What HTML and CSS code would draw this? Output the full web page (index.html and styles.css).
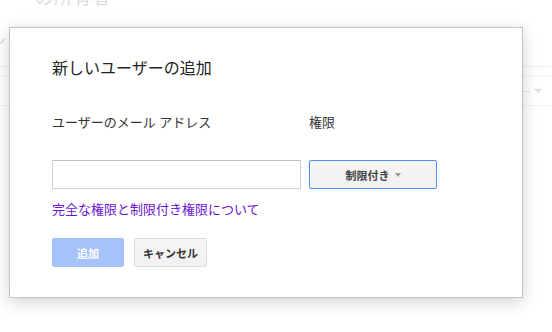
FILE: index.html
```html
<!DOCTYPE html>
<html lang="ja">
<head>
<meta charset="utf-8">
<link rel="stylesheet" href="styles.css">
</head>
<body>
<div class="page">
  <div class="bg-heading">ー&nbsp;&nbsp;の所有者</div>
  <div class="bg-side">ン</div>
  <div class="bg-line bg-line-a"></div>
  <div class="bg-line bg-line-b"></div>
  <div class="bg-row">
    <span class="bg-dash"></span>
    <span class="bg-arrow"></span>
  </div>
  <div class="bg-line bg-line-c"></div>
</div>

<div class="dialog">
  <div class="title">新しいユーザーの追加</div>
  <div class="grid labels">
    <div class="label">ユーザーのメール アドレス</div>
    <div class="label">権限</div>
  </div>
  <div class="grid fields">
    <input class="email" type="text">
    <button class="select">制限付き<span class="caret"></span></button>
  </div>
  <a class="link" href="#">完全な権限と制限付き権限について</a>
  <div class="actions">
    <button class="btn btn-primary">追加</button>
    <button class="btn btn-default">キャンセル</button>
  </div>
</div>
</body>
</html>
```

FILE: styles.css
```css
html, body {
  margin: 0;
  padding: 0;
  background: #fff;
}
body {
  width: 552px;
  height: 332px;
  overflow: hidden;
  position: relative;
  font-family: "Liberation Sans", Arial, "Noto Sans CJK JP", sans-serif;
  color: #333;
}

/* faded page behind the dialog */
.page {
  display: flex;
  flex-direction: column;
}
.bg-heading {
  margin-top: -13px;
  padding-left: 4px;
  font-size: 18px;
  line-height: 22px;
  color: #dcdcdc;
  letter-spacing: 1px;
}
.bg-side {
  margin-top: 25px;
  margin-left: -6px;
  font-size: 12px;
  line-height: 14px;
  color: #dadada;
}
.bg-line {
  height: 1px;
  background: #f0f0f0;
}
.bg-line-a { margin-top: 18px; }
.bg-line-b { margin-top: 9px; background: #f5f5f5; }
.bg-row {
  height: 28px;
  display: flex;
  align-items: center;
  justify-content: flex-end;
  gap: 5px;
  padding-right: 10px;
}
.bg-dash {
  width: 8px;
  height: 1px;
  background: #e6e6e6;
}
.bg-arrow {
  width: 0;
  height: 0;
  border-left: 4px solid transparent;
  border-right: 4px solid transparent;
  border-top: 4px solid #e0e0e0;
}
.bg-line-c { background: #f5f5f5; }

/* dialog */
.dialog {
  position: absolute;
  left: 9px;
  top: 27px;
  box-sizing: border-box;
  width: 514px;
  height: 271px;
  padding: 31px 0 29px 42px;
  background: #fff;
  border: 1px solid #c3c3c3;
  box-shadow: 0 4px 16px rgba(0, 0, 0, 0.18);
  display: flex;
  flex-direction: column;
  align-items: flex-start;
}
.title {
  font-size: 16px;
  line-height: 20px;
  color: #222;
}
.grid {
  display: grid;
  grid-template-columns: 249px 128px;
  column-gap: 8px;
}
.labels {
  margin-top: 36px;
}
.label {
  font-size: 13px;
  line-height: 16px;
  color: #333;
}
.fields {
  margin-top: 29px;
}
.email {
  box-sizing: border-box;
  width: 249px;
  height: 29px;
  margin: 0;
  border: 1px solid #cfcfcf;
  border-top-color: #c0c0c0;
  border-radius: 1px;
  padding: 0 8px;
  font-size: 13px;
  outline: none;
}
.select {
  box-sizing: border-box;
  width: 128px;
  height: 29px;
  margin: 0;
  border: 1px solid #4d90fe;
  border-radius: 2px;
  background: linear-gradient(#f5f5f5, #f1f1f1);
  font-family: inherit;
  font-size: 11px;
  font-weight: bold;
  color: #444;
  display: flex;
  align-items: center;
  justify-content: center;
  gap: 5px;
  padding: 0;
}
.caret {
  width: 0;
  height: 0;
  border-left: 3.5px solid transparent;
  border-right: 3.5px solid transparent;
  border-top: 4px solid #9a9a9a;
}
.link {
  margin-top: 13px;
  font-size: 13px;
  line-height: 16px;
  color: #6a14d0;
  text-decoration: none;
}
.actions {
  margin-top: 20px;
  display: flex;
  gap: 10px;
}
.btn {
  box-sizing: border-box;
  height: 29px;
  margin: 0;
  border-radius: 2px;
  font-family: inherit;
  font-size: 11px;
  font-weight: bold;
  padding: 0 8px;
}
.btn-primary {
  width: 72px;
  background: #a5c3f9;
  border: 1px solid #a0bff8;
  color: #fff;
}
.btn-default {
  width: 73px;
  background: linear-gradient(#f5f5f5, #f1f1f1);
  border: 1px solid #dcdcdc;
  color: #333;
}
```
